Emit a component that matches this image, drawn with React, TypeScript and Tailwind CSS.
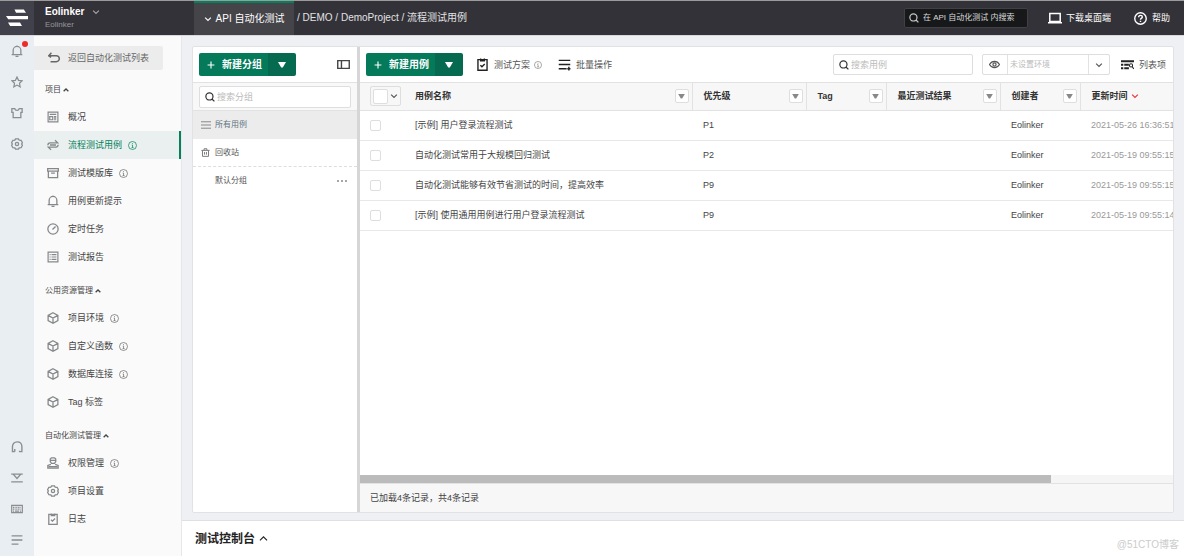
import type { ReactNode } from "react";

type IconProps = { className?: string };

function Svg({ className = "size-3", sw = 1.5, children }: { className?: string; sw?: number; children: ReactNode }) {
  return (
    <svg
      viewBox="0 0 14 14"
      className={`shrink-0 ${className}`}
      fill="none"
      stroke="currentColor"
      strokeWidth={sw}
      aria-hidden="true"
    >
      {children}
    </svg>
  );
}

const Bell = ({ className }: IconProps) => (
  <Svg className={className}>
    <path d="M2.500 11V6.200a4.500 4.500 0 0 1 9 0V11M.8 11.200h12.400M5.300 13.300h3.400M7 .5v1.500" />
  </Svg>
);
const Star = ({ className }: IconProps) => (
  <Svg className={className} sw={1.4}>
    <path d="M7 1.200l1.800 3.900 4.200.5-3.100 2.900.8 4.200L7 10.600l-3.700 2.100.8-4.200L1 5.600l4.200-.5z" />
  </Svg>
);
const Shirt = ({ className }: IconProps) => (
  <Svg className={className}>
    <path d="M1 1.800h3.400c.3 1.600 1.200 2.200 2.600 2.200s2.300-.6 2.600-2.200H13v4.400h-1.500v6.300h-9V6.200H1z" />
  </Svg>
);
const Gear = ({ className }: IconProps) => (
  <Svg className={className}>
    <path d="M5.300 1h3.400l.8 1.400 2.300.3L13.300 5.500 12.400 7l.9 1.500-1.500 2.800-2.300.3L8.700 13H5.300l-.8-1.400-2.300-.3L.7 8.500 1.600 7 .7 5.500l1.500-2.800 2.300-.3z" />
    <circle cx="7" cy="7" r="1.900" />
  </Svg>
);
const Headset = ({ className }: IconProps) => (
  <Svg className={className} sw={1.6}>
    <path d="M4.400 12.400H1.700V6.700C1.700 3.200 3.800 1 7.200 1s5.500 2.200 5.500 5.700v5.700H9.600M4.400 9.300v3.100M10 11.500v1.300" />
  </Svg>
);
const Download = ({ className }: IconProps) => (
  <Svg className={className} sw={1.600}>
    <path d="M.3 2.500h13.400M2.800 2.800L7 7.600l4.200-4.800M.3 11.500h13.400" />
  </Svg>
);
const Keyboard = ({ className }: IconProps) => (
  <Svg className={className} sw={1.400}>
    <path d="M.8 2.700h12.400v8.600H.8z" />
    <path d="M2.300 5h9.400M2.300 7.200h9.400" strokeDasharray="1.200 .7" />
    <path d="M2.300 9.400h1.200M4.500 9.400h5M10.500 9.400h1.200" />
  </Svg>
);
const Lines = ({ className }: IconProps) => (
  <Svg className={className}>
    <path d="M.7 2.200h12.600M.7 7h12.600M.7 11.800h8" />
  </Svg>
);
const MenuLines = ({ className }: IconProps) => (
  <Svg className={className} sw={1.400}>
    <path d="M0 2.500h14M0 7h14M0 11.500h14" />
  </Svg>
);
const Back = ({ className }: IconProps) => (
  <Svg className={className} sw={1.700}>
    <path d="M4 1L.9 4.300h8.800a3.500 3.500 0 0 1 0 7H3M.9 4.300l2.600 2" />
  </Svg>
);
const Overview = ({ className }: IconProps) => (
  <Svg className={className} sw={1.400}>
    <path d="M1.300 1.300h11.400v11.400H1.300zM3.200 4h7.600M3.200 6.500h3.500v3.700H3.200zM8.200 6.500h2.600M8.200 8.400h2.600M8.200 10.200h2.600" />
  </Svg>
);
const Flow = ({ className }: IconProps) => (
  <Svg className={className}>
    <path d="M9.300 1.300l3.300 3.300H3.700A2.700 2.700 0 0 0 1 7.200M4.700 12.700L1.400 9.400h8.900A2.700 2.700 0 0 0 13 6.800M3.500 7h7" />
  </Svg>
);
const Archive = ({ className }: IconProps) => (
  <Svg className={className}>
    <path d="M.8 1.800h12.400v2.900H.8zM1.600 4.700v7.800h10.800V4.700M4.800 7.200h4.400" />
  </Svg>
);
const Timer = ({ className }: IconProps) => (
  <Svg className={className}>
    <circle cx="7" cy="7" r="6" />
    <path d="M6.400 7.600l3.600-3.600" />
  </Svg>
);
const Report = ({ className }: IconProps) => (
  <Svg className={className} sw={1.400}>
    <path d="M1.300 1.300h11.400v11.400H1.300zM3 4.200h1.200M5.300 4.200H11M3 7h1.200M5.300 7H11M3 9.800h1.200M5.300 9.800H11" />
  </Svg>
);
const Cube = ({ className }: IconProps) => (
  <Svg className={className}>
    <path d="M7 .9l5.700 3v6.200L7 13.100l-5.700-3V3.900zM1.700 4.300L7 7.100l5.300-2.800M7 7v6" />
  </Svg>
);
const User = ({ className }: IconProps) => (
  <Svg className={className}>
    <path d="M5.200 1h3.600l1.400 1.400v3L8.700 7.500H5.300L3.800 5.400v-3zM4 3.900h6M4.500 8.500L1 9.900v3h12v-3L9.500 8.500M2 11.200h10" />
  </Svg>
);
const Clipboard = ({ className }: IconProps) => (
  <Svg className={className}>
    <path d="M2.100 1.700h9.800v11.500H2.100zM5 .5v2.500h4V.5M4.700 7.800l1.700 1.700 3-3" />
  </Svg>
);
const Trash = ({ className }: IconProps) => (
  <Svg className={className}>
    <path d="M.6 3.700h12.800M4.800 3.500V1.200h4.400v2.300M2.300 4v9h9.400V4M5.500 6.300v4M8.500 6.300v4" />
  </Svg>
);
const Info = ({ className }: IconProps) => (
  <Svg className={className} sw={1.100}>
    <circle cx="7" cy="7" r="6.200" />
    <path d="M5.800 6.200h1.300v4M5.600 10.200h3M7 3.400v1.300" />
  </Svg>
);
const Search = ({ className }: IconProps) => (
  <Svg className={className} sw={1.700}>
    <circle cx="6.200" cy="6.200" r="5" />
    <path d="M9.800 9.800l3.300 3.300" />
  </Svg>
);
const ChevronDown = ({ className }: IconProps) => (
  <Svg className={className} sw={2}>
    <path d="M2 4.500l5 5 5-5" />
  </Svg>
);
const ChevronUp = ({ className, sw = 1.800 }: IconProps & { sw?: number }) => (
  <Svg className={className} sw={sw}>
    <path d="M1.500 9.800L7 4.500l5.500 5.300" />
  </Svg>
);
const Plus = ({ className }: IconProps) => (
  <Svg className={className} sw={2}>
    <path d="M7 1v12M1 7h12" />
  </Svg>
);
const Triangle = ({ className }: IconProps) => (
  <svg viewBox="0 0 8 6" className={`shrink-0 ${className}`} fill="currentColor" aria-hidden="true">
    <path d="M0 0h8L4.800 5.500H3.200z" />
  </svg>
);

type Item = { icon: (p: IconProps) => ReactNode; label: string; info?: boolean; active?: boolean };

const sections: { title: string; items: Item[] }[] = [
  {
    title: "项目",
    items: [
      { icon: Overview, label: "概况" },
      { icon: Flow, label: "流程测试用例", info: true, active: true },
      { icon: Archive, label: "测试模版库", info: true },
      { icon: Bell, label: "用例更新提示" },
      { icon: Timer, label: "定时任务" },
      { icon: Report, label: "测试报告" },
    ],
  },
  {
    title: "公用资源管理",
    items: [
      { icon: Cube, label: "项目环境", info: true },
      { icon: Cube, label: "自定义函数", info: true },
      { icon: Cube, label: "数据库连接", info: true },
      { icon: Cube, label: "Tag 标签" },
    ],
  },
  {
    title: "自动化测试管理",
    items: [
      { icon: User, label: "权限管理", info: true },
      { icon: Gear, label: "项目设置" },
      { icon: Clipboard, label: "日志" },
    ],
  },
];

const rows = [
  { name: "[示例] 用户登录流程测试", level: "P1", time: "2021-05-26 16:36:51" },
  { name: "自动化测试常用于大规模回归测试", level: "P2", time: "2021-05-19 09:55:15" },
  { name: "自动化测试能够有效节省测试的时间，提高效率", level: "P9", time: "2021-05-19 09:55:15" },
  { name: "[示例] 使用通用用例进行用户登录流程测试", level: "P9", time: "2021-05-19 09:55:14" },
];

const columns = ["用例名称", "优先级", "Tag", "最近测试结果", "创建者"];

function TopBar() {
  return (
    <header className="flex h-9 shrink-0 items-stretch border-t border-b border-t-[#9b9b9b] border-b-[#d9d9dc] bg-[#333238] text-white">
      <a href="#home" aria-label="Eolinker" className="flex w-[34px] shrink-0 items-center justify-center bg-[#41414b]">
        <svg viewBox="0 0 22 18" className="h-[18px] w-[22px]" fill="currentColor" aria-hidden="true">
          <path d="M8.500.5h9.300l2.200 3.300H10zM0 7h22v3.300H2.200zM2 13.500h12l2 3.500H4.200z" />
        </svg>
      </a>
      <div className="flex w-40 shrink-0 flex-col justify-center pl-[11px]">
        <button type="button" className="flex items-center gap-2 text-[10px] leading-[14px] font-bold">
          Eolinker
          <ChevronDown className="size-2 text-[#a5a5aa]" />
        </button>
        <span className="text-[8px] leading-3 text-[#96969b]">Eolinker</span>
      </div>
      <button
        type="button"
        className="flex w-[100px] shrink-0 items-center justify-center gap-1 border-t-2 border-[#04805c] bg-[#454449] text-[10px] leading-4"
      >
        <ChevronDown className="size-2" />
        API 自动化测试
      </button>
      <nav className="flex items-center pl-[3px] text-[10px] leading-4 whitespace-pre text-[#e2e2e4]">
        / <a href="#demo">DEMO</a> / <a href="#project">DemoProject</a> / <a href="#cases">流程测试用例</a>
      </nav>
      <div className="ml-auto flex items-center pr-[14px] text-[9px] leading-3">
        <label className="flex h-5 w-[124px] items-center gap-1 rounded-xs border border-[#414145] bg-[#17181a] px-1">
          <Search className="size-[10px] text-[#c8c8cb]" />
          <input
            aria-label="搜索"
            placeholder="在 API 自动化测试 内搜索"
            className="min-w-0 flex-1 bg-transparent text-[8px] outline-none placeholder:text-[#d8d8da]"
          />
        </label>
        <a href="#desktop" className="ml-5 flex items-center gap-1">
          <Svg className="size-[14px]">
            <path d="M1.800 2.500h10.400v8H1.800zM0 11.800h14" />
          </Svg>
          下载桌面端
        </a>
        <a href="#help" className="ml-[23px] flex items-center gap-[5px]">
          <Svg className="size-[13px]">
            <circle cx="7" cy="7" r="6.200" />
            <path d="M5 5.600C5 4.400 5.800 3.600 7 3.600s2 .7 2 1.700C9 6.600 7 6.700 7 8.400M7 9.500v1.300" />
          </Svg>
          帮助
        </a>
      </div>
    </header>
  );
}

function Rail() {
  return (
    <aside className="flex w-[34px] shrink-0 flex-col items-center justify-between bg-[#e8eef2] pt-2 text-[#8b8d8f]">
      <div className="flex flex-col gap-[17px]">
        <button type="button" aria-label="通知" className="relative flex h-[14px] items-center">
          <Bell className="size-3" />
          <span className="absolute -top-[3px] -right-[5px] size-[6px] rounded-full bg-[#ee2b2b]" />
        </button>
        <button type="button" aria-label="收藏" className="flex h-[14px] items-center"><Star className="size-3" /></button>
        <button type="button" aria-label="主题" className="flex h-[14px] items-center"><Shirt className="size-3" /></button>
        <button type="button" aria-label="设置" className="flex h-[14px] items-center"><Gear className="size-3" /></button>
      </div>
      <div className="flex flex-col gap-[17px] pb-[9px]">
        <button type="button" aria-label="客服" className="flex h-[14px] items-center"><Headset className="size-3" /></button>
        <button type="button" aria-label="下载" className="flex h-[14px] items-center"><Download className="size-3" /></button>
        <button type="button" aria-label="快捷键" className="flex h-[14px] items-center"><Keyboard className="size-3" /></button>
        <button type="button" aria-label="菜单" className="flex h-[14px] items-center"><Lines className="size-3" /></button>
      </div>
    </aside>
  );
}

function Sidebar() {
  return (
    <nav className="w-[147px] shrink-0 bg-[#fafafa] pt-[10px] text-[9px] leading-3 text-[#444]">
      <a href="#list" className="flex h-6 w-[129px] items-center gap-2 rounded-r-xs bg-[#ececec] pl-[14px] text-[#666]">
        <Back className="size-3" />
        返回自动化测试列表
      </a>
      {sections.map((s) => (
        <section key={s.title}>
          <button type="button" className="flex h-[33px] items-center gap-[2px] pt-[6px] pl-[11px] text-[8px]">
            {s.title}
            <ChevronUp className="size-[6px]" sw={3} />
          </button>
          <ul>
            {s.items.map((it) => (
              <li key={it.label}>
                <a
                  href="#item"
                  className={`flex h-7 items-center border-r-2 pl-[13px] ${
                    it.active ? "border-[#04805c] bg-[#e9f0ef] text-[#04805c]" : "border-transparent"
                  }`}
                >
                  <it.icon className="size-3 text-[#85888a]" />
                  <span className="ml-[9px]">{it.label}</span>
                  {it.info && <Info className={`ml-[6px] size-[9px] ${it.active ? "" : "text-[#666]"}`} />}
                </a>
              </li>
            ))}
          </ul>
        </section>
      ))}
    </nav>
  );
}

function SplitButton({ label }: { label: string }) {
  return (
    <div className="flex h-[23px] w-[97px] shrink-0 overflow-hidden rounded-xs text-[10px] leading-4 font-bold text-white">
      <button type="button" className="flex flex-1 items-center gap-[7px] bg-[#047a5a] pl-2">
        <Plus className="size-2" />
        {label}
      </button>
      <button type="button" aria-label="更多" className="flex w-7 items-center justify-center bg-[#056a50]">
        <Triangle className="h-[6px] w-2" />
      </button>
    </div>
  );
}

function GroupPanel() {
  return (
    <section className="flex w-[164px] shrink-0 flex-col text-[9px] leading-3 text-[#555]">
      <div className="flex h-9 items-center justify-between border-b border-[#e2e2e4] pr-[7px] pl-[6px]">
        <SplitButton label="新建分组" />
        <button type="button" aria-label="收起" className="text-[#444]">
          <Svg className="size-[13px]">
            <path d="M.8 2.800h12.400v8.400H.8zM4.800 2.800v8.400" />
          </Svg>
        </button>
      </div>
      <div className="flex h-7 items-center border-b border-[#e2e2e4] bg-[#f8f8f8] px-[6px]">
        <label className="flex h-[22px] flex-1 items-center gap-[2px] rounded-xs border border-[#dedede] bg-white px-[5px]">
          <Search className="size-[10px] text-[#333]" />
          <input
            aria-label="搜索分组"
            placeholder="搜索分组"
            className="min-w-0 flex-1 bg-transparent outline-none placeholder:text-[#bbb]"
          />
        </label>
      </div>
      <ul className="text-[8px]">
        <li>
          <a href="#all" className="flex h-7 items-center gap-1 bg-[#ececec] pl-2 text-[#5d7380]">
            <MenuLines className="size-[10px] text-[#888]" />
            所有用例
          </a>
        </li>
        <li>
          <a href="#trash" className="flex h-7 items-center gap-[5px] border-b border-dashed border-[#dedede] pl-2">
            <Trash className="size-[9px] text-[#777]" />
            回收站
          </a>
        </li>
        <li className="flex h-7 items-center justify-between pr-[10px] pl-[22px]">
          <a href="#default">默认分组</a>
          <button type="button" aria-label="更多操作" className="flex gap-[2px]">
            <span className="size-[2px] rounded-full bg-[#888]" />
            <span className="size-[2px] rounded-full bg-[#888]" />
            <span className="size-[2px] rounded-full bg-[#888]" />
          </button>
        </li>
      </ul>
    </section>
  );
}

function Toolbar() {
  return (
    <div className="flex h-9 shrink-0 items-center border-b border-[#e2e2e4] pr-[7px] pl-[6px] text-[#555]">
      <SplitButton label="新建用例" />
      <button type="button" className="ml-[13px] flex items-center">
        <Clipboard className="size-[13px] text-[#222]" />
        <span className="ml-[5px]">测试方案</span>
        <Info className="ml-1 size-2 text-[#777]" />
      </button>
      <button type="button" className="ml-4 flex items-center gap-[5px]">
        <Svg className="size-[13px] text-[#222]" sw={1.5}>
          <path d="M.8 2.500h12.400M.8 7h12.400M.8 11.500h8.500M11.700 9.500v4M10 11.500h3.400" />
        </Svg>
        批量操作
      </button>
      <label className="ml-auto flex h-[21px] w-[140px] items-center gap-[2px] rounded-xs border border-[#dedede] px-[5px]">
        <Search className="size-[10px] text-[#333]" />
        <input
          aria-label="搜索用例"
          placeholder="搜索用例"
          className="min-w-0 flex-1 bg-transparent outline-none placeholder:text-[#bbb]"
        />
      </label>
      <div className="ml-[9px] flex h-[21px] w-32 items-stretch rounded-xs border border-[#dedede]">
        <button type="button" aria-label="查看环境" className="flex w-[25px] items-center justify-center border-r border-[#e2e2e4]">
          <Svg className="size-[11px]">
            <path d="M.6 7C2.200 4.300 4.400 3 7 3s4.800 1.300 6.400 4C11.800 9.700 9.600 11 7 11S2.200 9.700.6 7z" />
            <circle cx="7" cy="7" r="2" />
          </Svg>
        </button>
        <select aria-label="环境" className="min-w-0 flex-1 appearance-none bg-transparent pl-[2px] text-[8px] text-[#bbb] outline-none">
          <option>未设置环境</option>
        </select>
        <span className="pointer-events-none flex w-[21px] items-center justify-center border-l border-[#e2e2e4]">
          <ChevronDown className="size-2" />
        </span>
      </div>
      <button type="button" className="ml-[11px] flex items-center gap-[5px]">
        <Svg className="size-[13px] text-[#222]" sw={2}>
          <path d="M0 3.500h14M0 7.300h2.500M3.500 7.300h5M0 11h2.500M3.500 11h5" />
          <circle cx="10.800" cy="8" r="1.700" strokeWidth="1.100" />
          <path d="M12 9.300l1.800 2.400" strokeWidth="1.100" />
        </Svg>
        列表项
      </button>
    </div>
  );
}

function CaseTable() {
  return (
    <table className="w-[958px] table-fixed border-collapse text-left">
      <colgroup>
        <col className="w-[44px]" />
        <col className="w-[288px]" />
        <col className="w-[114px]" />
        <col className="w-[80px]" />
        <col className="w-[114px]" />
        <col className="w-[80px]" />
        <col />
      </colgroup>
      <thead>
        <tr className="h-[27px] border-b border-[#e2e2e4] bg-[#f7f7f7] text-[#333]">
          <th className="p-0 pl-[10px]">
            <div className="flex h-5 w-[31px] items-center justify-between rounded-xs border border-[#dedede] px-[2px]">
              <input type="checkbox" aria-label="全选" className="size-[15px] appearance-none rounded-xs border border-[#dedede] bg-white" />
              <ChevronDown className="size-2 text-[#555]" />
            </div>
          </th>
          {columns.map((c) => (
            <th key={c} className="border-r border-[#e2e2e4] p-0 pr-[3px] pl-[11px]">
              <div className="flex items-center justify-between">
                {c}
                <button
                  type="button"
                  aria-label={`筛选${c}`}
                  className="flex size-[14px] items-center justify-center rounded-xs border border-[#dedede] bg-white text-[#888]"
                >
                  <Triangle className="h-[5px] w-[7px]" />
                </button>
              </div>
            </th>
          ))}
          <th className="p-0 pl-[11px]">
            <button type="button" className="flex items-center gap-[3px] font-bold">
              更新时间
              <ChevronDown className="size-2 text-[#e33]" />
            </button>
          </th>
        </tr>
      </thead>
      <tbody>
        {rows.map((r) => (
          <tr key={r.name} className="h-[30px] border-b border-[#e8e8ea] text-[#444]">
            <td className="p-0 pl-[10px]">
              <input type="checkbox" aria-label={r.name} className="block size-[11px] appearance-none rounded-xs border border-[#dedede]" />
            </td>
            <td className="p-0 pl-[11px]">{r.name}</td>
            <td className="p-0 pl-[11px]">{r.level}</td>
            <td />
            <td />
            <td className="p-0 pl-[11px]">Eolinker</td>
            <td className="p-0 pl-[11px] text-[#999]">{r.time}</td>
          </tr>
        ))}
      </tbody>
    </table>
  );
}

export default function App() {
  return (
    <div className="flex min-h-screen flex-col font-['Liberation_Sans','Noto_Sans_CJK_SC',sans-serif]">
      <TopBar />
      <div className="flex flex-1">
        <Rail />
        <Sidebar />
        <div className="flex min-w-0 flex-1 flex-col border-l border-[#e6e7ea] bg-[#eff0f4]">
          <main className="flex flex-1 pt-[10px] pr-[10px] pb-[7px] pl-[10px]">
            <div className="flex min-w-0 flex-1 rounded-xs border border-[#e2e2e4] bg-white">
              <GroupPanel />
              <section className="flex min-w-0 flex-1 flex-col border-l-[3px] border-[#d6d6d8] text-[9px] leading-3">
                <Toolbar />
                <div className="flex-1 overflow-hidden">
                  <CaseTable />
                </div>
                <div className="h-2 bg-[#f5f5f5]">
                  <div className="h-2 w-[85%] bg-[#bbb]" />
                </div>
                <footer className="flex h-[29px] items-center border-t border-[#e2e2e4] bg-[#f7f7f7] pl-[10px] text-[#444]">
                  已加载4条记录，共4条记录
                </footer>
              </section>
            </div>
          </main>
          <div className="flex h-9 items-center justify-between border-t border-[#dfe0e3] bg-white pr-[5px] pl-[13px]">
            <button type="button" className="flex items-center gap-1 text-[12px] leading-4 font-bold text-[#222]">
              测试控制台
              <ChevronUp className="size-[9px]" />
            </button>
            <span className="pt-3 text-[10px] leading-4 text-[#ccc]">@51CTO博客</span>
          </div>
        </div>
      </div>
    </div>
  );
}
